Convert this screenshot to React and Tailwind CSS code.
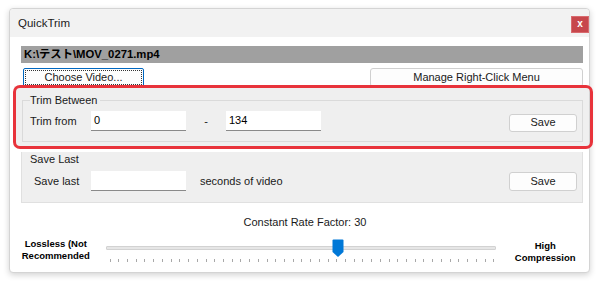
import React from "react";

const ticks = Array.from({ length: 45 });

function Button({ children, className = "" }) {
    return (
        <div className={`flex items-center justify-center bg-[#fdfdfd] border border-[#d0d0d0] rounded-[3px] text-[11px] text-[#1a1a1a] ${className}`}>
            {children}
        </div>
    );
}

function Field({ value, className = "" }) {
    return (
        <div className={`flex items-center h-[20px] w-[95px] bg-white border-b border-[#8a8a8a] pl-[3px] text-[11px] text-black ${className}`}>
            {value}
        </div>
    );
}

export default function App() {
    return (
        <div className="w-[603px] h-[286px] bg-white overflow-hidden" style={{ fontFamily: '"Liberation Sans", "Noto Sans CJK JP", sans-serif' }}>
            <div className="relative ml-[9px] mt-[8px] w-[581px] h-[265px] border border-[#d4d4d4] rounded-[4px] bg-white shadow-[0_2px_6px_rgba(0,0,0,0.18)]">
                {/* title bar */}
                <div className="flex items-start justify-between h-[28px] bg-[#f2f2f2] rounded-t-[4px]">
                    <div className="pl-[8px] leading-[28px] text-[11.5px] text-[#1a1a1a]">QuickTrim</div>
                    <div className="mt-[7px] w-[18px] h-[17px] bg-[#c7474c] border border-[#d86a6e] flex items-center justify-center text-white text-[10px] font-bold leading-none pb-[1px]">x</div>
                </div>

                <div className="flex flex-col pl-[11px] pr-[6px]">
                    <div className="mt-[9px] h-[17px] bg-[#a0a0a0] pl-[3px] flex items-center text-[11.3px] font-bold text-black">
                        K:\テスト\MOV_0271.mp4
                    </div>

                    <div className="mt-[5px] flex justify-between h-[19px]">
                        <div className="ml-[2px] w-[121px] h-[19px] border border-[#0067c0] rounded-[2px] bg-[#fdfdfd] p-[1px]">
                            <div className="w-full h-full border border-dotted border-[#333] flex items-center justify-center text-[11px] text-[#1a1a1a]">Choose Video...</div>
                        </div>
                        <Button className="w-[213px] h-[19px]">Manage Right-Click Menu</Button>
                    </div>

                    {/* trim between */}
                    <div className="-ml-[7px] -mr-[6px] mt-[-1px] h-[61px] bg-[#efefef] pl-[8px] pr-[6px] pt-[6px]">
                        <fieldset className="border border-[#dadada] pl-[7px] pr-[5px] pb-[10px]">
                            <legend className="pr-[3px] text-[11px] text-[#1a1a1a] leading-[16px]">Trim Between</legend>
                            <div className="mt-[3px] flex items-center h-[20px]">
                                <div className="w-[61px] text-[11px] text-[#1a1a1a]">Trim from</div>
                                <Field value="0" />
                                <div className="w-[40px] text-center text-[11px] text-[#1a1a1a]">-</div>
                                <Field value="134" />
                                <Button className="ml-auto w-[68px] h-[18px] mt-[3px]">Save</Button>
                            </div>
                        </fieldset>
                    </div>

                    {/* save last */}
                    <div className="mt-[5px] h-[51px] bg-[#efefef] border-l border-r border-b border-[#e0e0e0] pl-[8px] pr-[5px]">
                        <div className="text-[11px] leading-[12px] text-[#1a1a1a] pt-[1px]">Save Last</div>
                        <div className="mt-[6px] flex items-center h-[20px]">
                            <div className="pl-[4px] w-[61px] text-[11px] text-[#1a1a1a]">Save last</div>
                            <Field value="" />
                            <div className="ml-[14px] text-[11px] text-[#1a1a1a]">seconds of video</div>
                            <Button className="ml-auto w-[68px] h-[19px]">Save</Button>
                        </div>
                    </div>

                    <div className="mt-[11px] text-center text-[11px] leading-[16px] text-[#1a1a1a] pl-[6px]">Constant Rate Factor: 30</div>

                    <div className="mt-[8px] flex items-start">
                        <div className="w-[70px] text-center text-[9.5px] font-bold leading-[12px] text-black">Lossless (Not<br />Recommended</div>
                        <div className="relative ml-[15px] w-[393px] h-[28px]">
                            <div className="mt-[8px] h-[4px] bg-[#e6e6e6] border border-[#d2d2d2] rounded-[1px]" />
                            <svg className="absolute left-[226px] top-[1px]" width="12" height="18" viewBox="0 0 12 18">
                                <path d="M1.5 0.5 H10.5 Q11.5 0.5 11.5 1.5 V13 L6 18 L0.5 13 V1.5 Q0.5 0.5 1.5 0.5 Z" fill="#0078d7" />
                            </svg>
                            <div className="ml-[4px] mt-[9px] w-[385px] flex justify-between">
                                {ticks.map((_, i) => (
                                    <div key={i} className="w-px h-[3px] bg-[#a8a8a8]" />
                                ))}
                            </div>
                        </div>
                        <div className="ml-[11px] w-[76px] pt-[2px] text-center text-[9.5px] font-bold leading-[12px] text-black">High<br />Compression</div>
                    </div>
                </div>

                {/* highlight */}
                <div className="absolute left-[3px] top-[76px] w-[580px] h-[64px] border-[3px] border-[#e8333b] rounded-[7px] pointer-events-none" />
            </div>
        </div>
    );
}
